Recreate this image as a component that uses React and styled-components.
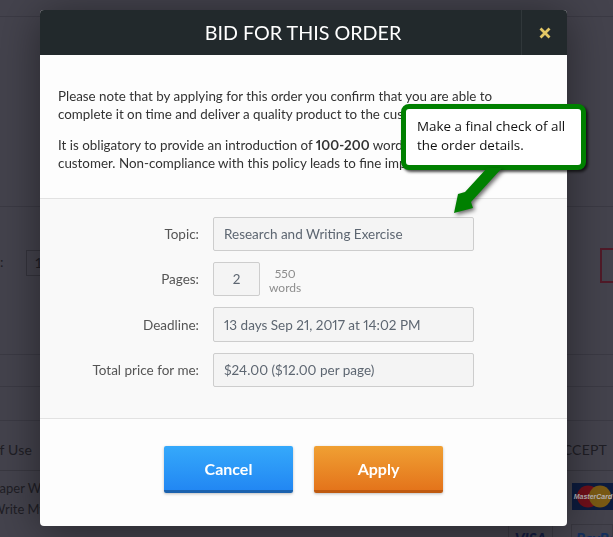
import React from 'react'
import styled, {createGlobalStyle} from 'styled-components'

const GlobalStyle = createGlobalStyle`
html, body{
    margin: 0;
    padding: 0;
    height: 100%;
    overflow: hidden;
    background: #44434d;
}
*{
    box-sizing: border-box;
}
`

const rows = [
    {label: 'Topic:', value: 'Research and Writing Exercise', height: 34},
    {label: 'Deadline:', value: '13 days Sep 21, 2017 at 14:02 PM', height: 35},
    {label: 'Total price for me:', value: '$24.00 ($12.00 per page)', height: 34},
]

const App = () =>{
    const [topic, deadline, total] = rows

    return(
        <>
            <GlobalStyle/>
            <Page>
                <Band $height={17}/>
                <Band $height={190}/>
                <PriceBand>
                    <Colon>:</Colon>
                    <DimInput>1</DimInput>
                    <RedBox/>
                </PriceBand>
                <Band $height={32}/>
                <Band $height={34}/>
                <FooterHead>
                    <span>Terms of Use</span>
                    <span>WE ACCEPT</span>
                </FooterHead>
                <FooterBody>
                    <FooterLinks>
                        <span>Paper Writer</span>
                        <span>Write My Paper</span>
                    </FooterLinks>
                    <Cards>
                        <MasterCard viewBox="0 0 41 27">
                            <rect width="41" height="27" fill="#0d1c3f"/>
                            <circle cx="16" cy="13.5" r="11" fill="#71101a"/>
                            <circle cx="28" cy="13.5" r="11" fill="#7a5a14"/>
                            <text x="21" y="16" textAnchor="middle" fontFamily="Liberation Sans" fontSize="7" fontStyle="italic" fontWeight="700" fill="#b8b4b6">MasterCard</text>
                        </MasterCard>
                        <CardRow>
                            <VisaBox>VISA</VisaBox>
                            <PayBox>PayPal</PayBox>
                        </CardRow>
                    </Cards>
                </FooterBody>
            </Page>
            <Modal>
                <Header>
                    <Title>BID FOR THIS ORDER</Title>
                    <CloseCell>
                        <svg width="12" height="12" viewBox="0 0 12 12">
                            <path d="M1.5 1.5 L10.5 10.5 M10.5 1.5 L1.5 10.5" stroke="#e3c765" strokeWidth="2.8" fill="none"/>
                        </svg>
                    </CloseCell>
                </Header>
                <Intro>
                    <p>Please note that by applying for this order you confirm that you are able to<br/>complete it on time and deliver a quality product to the customer.</p>
                    <p>It is obligatory to provide an introduction of <b>100-200</b> words to the<br/>customer. Non-compliance with this policy leads to fine imposition.</p>
                </Intro>
                <Form>
                    <FormRow>
                        <Label>{topic.label}</Label>
                        <Field $height={topic.height}>{topic.value}</Field>
                    </FormRow>
                    <FormRow>
                        <Label>Pages:</Label>
                        <PagesField $height={34}>2</PagesField>
                        <Words>550<br/>words</Words>
                    </FormRow>
                    <FormRow>
                        <Label>{deadline.label}</Label>
                        <Field $height={deadline.height}>{deadline.value}</Field>
                    </FormRow>
                    <FormRow>
                        <Label>{total.label}</Label>
                        <Field $height={total.height}>{total.value}</Field>
                    </FormRow>
                </Form>
                <Actions>
                    <ActionButton $top="#35a9fb" $bottom="#2287f3" $edge="#1b62ae">Cancel</ActionButton>
                    <ActionButton $top="#f0a033" $bottom="#e4741b" $edge="#bf5a10">Apply</ActionButton>
                </Actions>
            </Modal>
            <Callout>Make a final check of all the order details.</Callout>
            <Arrow width="60" height="52" viewBox="0 0 60 52">
                <polygon points="37,3 52,3 21,37 23,43 4,48 8,29 15,27" fill="#008000"/>
            </Arrow>
        </>
    )
}

const Page = styled.div`
width: 613px;
height: 537px;
overflow: hidden;
background: #44434d;
font-family: Lato, sans-serif;
color: #1f1e25;
`

const Band = styled.div`
height: ${props => props.$height}px;
border-bottom: 1px solid #3b3a44;
`

const PriceBand = styled.div`
height: 148px;
padding-top: 43px;
display: flex;
align-items: flex-start;
border-bottom: 1px solid #3b3a44;
`

const Colon = styled.span`
font-size: 14px;
margin: 3px 22px 0 0;
`

const DimInput = styled.div`
width: 60px;
height: 26px;
padding: 3px 8px;
font-size: 14px;
border: 1px solid #35343d;
`

const RedBox = styled.div`
width: 40px;
height: 35px;
margin: -2px -27px 0 auto;
border: 2px solid #501a28;
flex-shrink: 0;
`

const FooterHead = styled.div`
height: 50px;
padding: 20px 6px 0 0;
display: flex;
justify-content: space-between;
font-size: 14px;
letter-spacing: 0.2px;
border-bottom: 1px solid #393841;
span:first-child{
    margin-left: -50px;
}
`

const FooterBody = styled.div`
display: flex;
justify-content: space-between;
`

const FooterLinks = styled.div`
display: flex;
flex-direction: column;
gap: 4px;
padding-top: 9px;
margin-left: -8px;
font-size: 13px;
white-space: nowrap;
span{
    line-height: 17px;
}
`

const Cards = styled.div`
width: 105px;
flex-shrink: 0;
padding-top: 12px;
`

const MasterCard = styled.svg`
display: block;
width: 41px;
height: 27px;
margin-left: 64px;
`

const CardRow = styled.div`
display: flex;
margin-top: 14px;
font-style: italic;
font-weight: 900;
font-size: 15px;
`

const VisaBox = styled.div`
width: 45px;
height: 30px;
padding-top: 4px;
color: #141c40;
text-align: center;
border: 1px solid #3a3942;
`

const PayBox = styled.div`
margin-left: 18px;
width: 42px;
height: 30px;
padding: 4px 0 0 4px;
color: #14305e;
border: 1px solid #3a3942;
white-space: nowrap;
overflow: hidden;
`

const Modal = styled.div`
position: fixed;
top: 10px;
left: 40px;
width: 527px;
height: 516px;
background: #fdfdfd;
border-radius: 4px;
box-shadow: 0 5px 45px rgba(0,0,0,0.45);
font-family: Lato, sans-serif;
font-variant-numeric: proportional-nums;
overflow: hidden;
`

const Header = styled.div`
height: 45px;
display: flex;
background: #22292c;
`

const Title = styled.h2`
flex: 1;
margin: 0;
padding-left: 45px;
text-align: center;
font-size: 19.7px;
font-weight: 400;
line-height: 45px;
color: #fff;
`

const CloseCell = styled.div`
width: 46px;
display: flex;
align-items: center;
justify-content: center;
border-left: 1px solid #30373a;
`

const Intro = styled.div`
height: 143px;
padding: 32px 18px 0;
font-size: 13.36px;
line-height: 18px;
color: #333;
white-space: nowrap;
overflow: hidden;
p{
    margin: 0 0 13px;
}
b{
    font-weight: 700;
}
`

const Form = styled.div`
height: 221px;
padding-top: 18px;
display: flex;
flex-direction: column;
gap: 11px;
background: #f9f9f9;
border-top: 1px solid #e2e2e2;
border-bottom: 1px solid #e2e2e2;
`

const FormRow = styled.div`
display: flex;
align-items: center;
`

const Label = styled.div`
width: 159px;
margin-right: 14px;
text-align: right;
font-size: 13.5px;
color: #555;
`

const Field = styled.div`
width: 261px;
height: ${props => props.$height}px;
padding: 0 10px;
display: flex;
align-items: center;
font-size: 13.5px;
color: #5d6671;
background: #f4f4f4;
border: 1px solid #cdcdcd;
border-radius: 2px;
`

const PagesField = styled(Field)`
width: 47px;
padding: 0;
justify-content: center;
`

const Words = styled.div`
margin: 3px 0 0 9px;
text-align: center;
font-size: 12px;
line-height: 14px;
color: #8d8d8d;
`

const Actions = styled.div`
padding-top: 27px;
display: flex;
justify-content: center;
gap: 21px;
`

const ActionButton = styled.button`
width: 129px;
height: 47px;
padding: 0;
font-family: Lato, sans-serif;
font-size: 16px;
font-weight: 700;
color: #fff;
background: linear-gradient(${props => props.$top}, ${props => props.$bottom});
border: 0;
border-bottom: 3px solid ${props => props.$edge};
border-radius: 2px;
box-shadow: 0 1px 3px rgba(0,0,0,0.25);
`

const Callout = styled.div`
position: fixed;
top: 104px;
left: 401px;
width: 185px;
height: 66px;
padding: 8px 11px;
font-family: "Open Sans", sans-serif;
font-size: 13.4px;
line-height: 19px;
color: #111;
background: #fff;
border: 5px solid #008000;
border-radius: 8px;
box-shadow: 2px 2px 3px rgba(0,0,0,0.7);
`

const Arrow = styled.svg`
position: fixed;
top: 165px;
left: 450px;
filter: drop-shadow(2px 2px 2px rgba(0,0,0,0.6));
`

export default App
